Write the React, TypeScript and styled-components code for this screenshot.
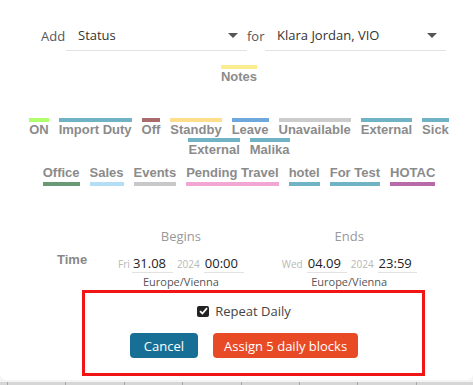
import styled, { createGlobalStyle } from "styled-components";

const GlobalStyle = createGlobalStyle`
  body {
    margin: 0;
    background: #f4f4f4;
    font-family: "Open Sans", "Liberation Sans", sans-serif;
  }
`;

const Page = styled.div`
  width: 473px;
  height: 385px;
  overflow: hidden;
`;

const Card = styled.div`
  background: #fff;
  height: 380px;
  border-radius: 0 0 6px 6px;
  box-sizing: border-box;
  padding-top: 20px;
`;

const HeaderRow = styled.div`
  display: flex;
  align-items: center;
  padding-left: 41px;
`;

const FieldLabel = styled.span<{ $w: number }>`
  width: ${(p) => p.$w}px;
  font-size: 13px;
  color: #555;
`;

const Select = styled.div`
  width: 181px;
  height: 31px;
  box-sizing: border-box;
  display: flex;
  align-items: center;
  justify-content: space-between;
  padding: 0 9px 0 12px;
  border-bottom: 1px solid #e2e2e2;
  font-size: 13px;
  color: #333;
`;

const Caret = styled.span`
  width: 0;
  height: 0;
  border-left: 5px solid transparent;
  border-right: 5px solid transparent;
  border-top: 5px solid #555;
`;

const Legend = styled.div<{ $top: number }>`
  display: flex;
  flex-wrap: wrap;
  justify-content: center;
  column-gap: 10px;
  padding-left: 5px;
  margin-top: ${(p) => p.$top}px;
`;

const Tag = styled.div<{ $color: string; $below?: boolean }>`
  display: flex;
  flex-direction: ${(p) => (p.$below ? "column-reverse" : "column")};
  gap: ${(p) => (p.$below ? 1 : 0)}px;
  font: bold 13px/16px "Liberation Sans", Arial, sans-serif;
  color: #8b8b8b;
  white-space: nowrap;
  &::before {
    content: "";
    height: 4px;
    background: ${(p) => p.$color};
  }
`;

const TimeSection = styled.div`
  display: flex;
  align-items: flex-start;
  padding-left: 57px;
  margin-top: 41px;
`;

const TimeLabel = styled.span`
  font: bold 13px/16px "Liberation Sans", Arial, sans-serif;
  color: #888;
  margin: 25px 31px 0 0;
`;

const Block = styled.div`
  display: flex;
  flex-direction: column;
  align-items: center;
  & + & {
    margin-left: 38px;
  }
`;

const BlockTitle = styled.span`
  font-size: 13px;
  line-height: 18px;
  color: #999;
  margin-bottom: 9px;
`;

const Inputs = styled.div`
  display: flex;
  align-items: baseline;
`;

const Muted = styled.span<{ $gap: number }>`
  font-size: 10px;
  color: #b8b8b8;
  margin-right: ${(p) => p.$gap}px;
`;

const Field = styled.span<{ $w: number }>`
  width: ${(p) => p.$w}px;
  box-sizing: border-box;
  padding-left: 1px;
  font-size: 13px;
  line-height: 18px;
  color: #222;
  border-bottom: 1px solid #e2e2e2;
  margin-right: 4px;
  &:last-child {
    margin-right: 0;
  }
`;

const Zone = styled.span`
  font-size: 11px;
  line-height: 13px;
  color: #555;
  margin-top: 2px;
`;

const Highlight = styled.div`
  margin: 2px 48px 0 82px;
  border: 3px solid #f21515;
  padding: 9px 19px 15px 0;
  display: flex;
  flex-direction: column;
  align-items: center;
`;

const CheckRow = styled.label`
  display: flex;
  align-items: center;
  gap: 6px;
  font-size: 13px;
  line-height: 18px;
  color: #444;
`;

const CheckBox = styled.span`
  width: 12px;
  height: 11px;
  border-radius: 2px;
  background: #222;
  display: flex;
  align-items: center;
  justify-content: center;
`;

const Buttons = styled.div`
  display: flex;
  gap: 15px;
  margin-top: 13px;
`;

const Button = styled.button<{ $tone: "blue" | "red" }>`
  height: 25px;
  border: none;
  border-radius: 4px;
  padding: 0 ${(p) => (p.$tone === "blue" ? 14 : 11)}px;
  font-family: "Open Sans", sans-serif;
  font-size: 13px;
  color: #fff;
  background: ${(p) => (p.$tone === "blue" ? "#176f95" : "#e84a26")};
`;

const Ticks = styled.div`
  display: flex;
  margin-top: 2px;
  padding-left: 7px;
  height: 3px;
  background: #d6d6d6;
`;

const Tick = styled.span`
  flex: 0 0 57.4px;
  border-left: 1px solid #a8a8a8;
`;

const teal = "#6fb3c5";

const topTags = [
  { label: "ON", color: "#afff6c" },
  { label: "Import Duty", color: teal },
  { label: "Off", color: "#a96b6b" },
  { label: "Standby", color: "#ffdf8b" },
  { label: "Leave", color: "#6fa8dc" },
  { label: "Unavailable", color: "#cccccc" },
  { label: "External", color: teal },
  { label: "Sick", color: teal },
  { label: "External", color: teal },
  { label: "Malika", color: teal },
];

const bottomTags = [
  { label: "Office", color: "#6a9a75" },
  { label: "Sales", color: "#b4ddf6" },
  { label: "Events", color: "#c8c8c8" },
  { label: "Pending Travel", color: "#f2a6d4" },
  { label: "hotel", color: teal },
  { label: "For Test", color: teal },
  { label: "HOTAC", color: "#b66aa9" },
];

export default function App() {
  return (
    <Page>
      <GlobalStyle />
      <Card>
        <HeaderRow>
          <FieldLabel $w={25}>Add</FieldLabel>
          <Select>
            Status
            <Caret />
          </Select>
          <FieldLabel $w={18}>for</FieldLabel>
          <Select>
            Klara Jordan, VIO
            <Caret />
          </Select>
        </HeaderRow>

        <Legend $top={14}>
          <Tag $color="#fbec90">Notes</Tag>
        </Legend>

        <Legend $top={33}>
          {topTags.map((t, i) => (
            <Tag key={i} $color={t.color}>
              {t.label}
            </Tag>
          ))}
        </Legend>

        <Legend $top={7}>
          {bottomTags.map((t, i) => (
            <Tag key={i} $color={t.color} $below>
              {t.label}
            </Tag>
          ))}
        </Legend>

        <TimeSection>
          <TimeLabel>Time</TimeLabel>
          <Block>
            <BlockTitle>Begins</BlockTitle>
            <Inputs>
              <Muted $gap={2}>Fri</Muted>
              <Field $w={41}>31.08</Field>
              <Muted $gap={4}>2024</Muted>
              <Field $w={40}>00:00</Field>
            </Inputs>
            <Zone>Europe/Vienna</Zone>
          </Block>
          <Block>
            <BlockTitle>Ends</BlockTitle>
            <Inputs>
              <Muted $gap={4}>Wed</Muted>
              <Field $w={40}>04.09</Field>
              <Muted $gap={4}>2024</Muted>
              <Field $w={39}>23:59</Field>
            </Inputs>
            <Zone>Europe/Vienna</Zone>
          </Block>
        </TimeSection>

        <Highlight>
          <CheckRow>
            <CheckBox>
              <svg width="9" height="8" viewBox="0 0 9 8">
                <path d="M1 4.2 L3.4 6.5 L8 1.2" fill="none" stroke="#fff" strokeWidth="1.8" />
              </svg>
            </CheckBox>
            Repeat Daily
          </CheckRow>
          <Buttons>
            <Button $tone="blue">Cancel</Button>
            <Button $tone="red">Assign 5 daily blocks</Button>
          </Buttons>
        </Highlight>
      </Card>
      <Ticks>
        {Array.from({ length: 9 }).map((_, i) => (
          <Tick key={i} />
        ))}
      </Ticks>
    </Page>
  );
}
